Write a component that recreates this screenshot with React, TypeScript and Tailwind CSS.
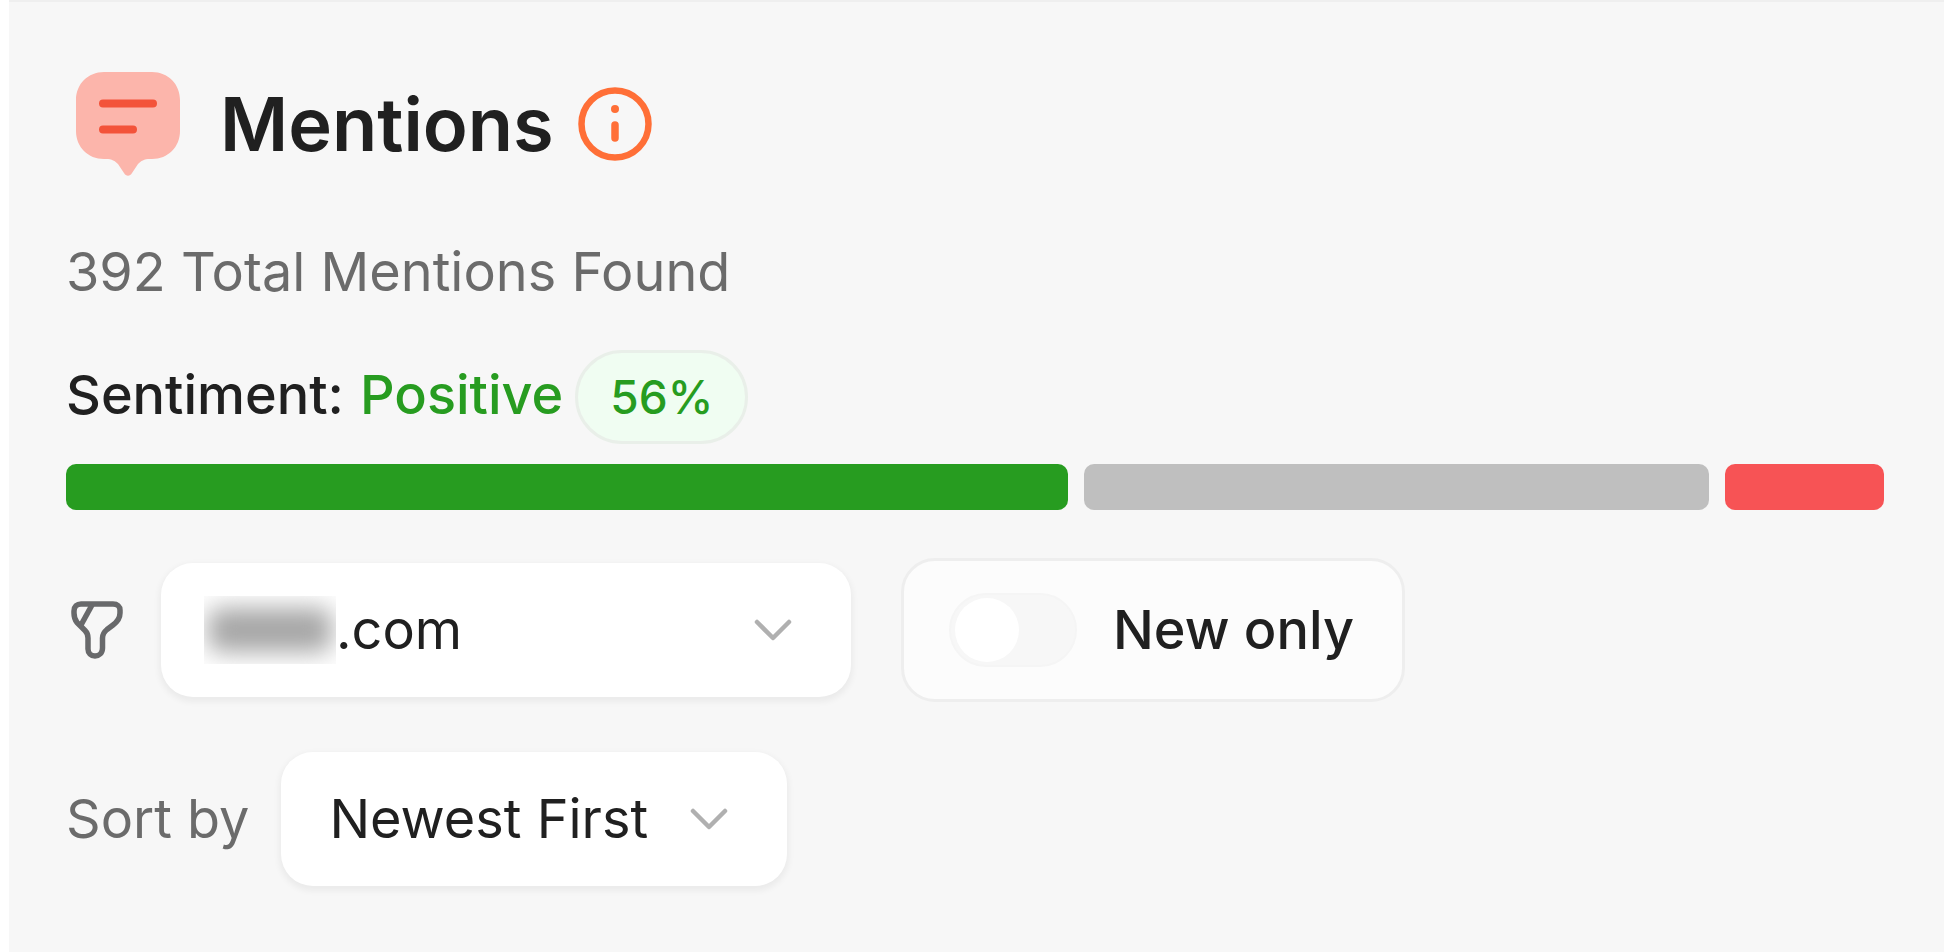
import { useState } from 'react';

const sentiment = [
  { label: 'Positive', count: 220, color: 'bg-[#279c20]' },
  { label: 'Neutral', count: 137, color: 'bg-[#bfbfbf]' },
  { label: 'Negative', count: 35, color: 'bg-[#f75355]' },
];

const MentionsIcon = () => (
  <svg className="h-[104px] w-[104px] shrink-0" viewBox="0 0 104 104" fill="none" aria-hidden="true">
    <path
      d="M28 0H76C92 0 104 12 104 28V59C104 75 92 87 76 87H74C68 87 65 89 62 92L56 101C54 104.500 50 104.500 48 101L42 92C39 89 36 87 30 87H28C12 87 0 75 0 59V28C0 12 12 0 28 0Z"
      fill="#fcb5ab"
    />
    <path d="M27 31.500H77M27 57.500H57" stroke="#f3533a" strokeWidth="8" strokeLinecap="round" />
  </svg>
);

const InfoIcon = () => (
  <svg className="h-[74px] w-[74px]" viewBox="0 0 74 74" fill="none" aria-hidden="true">
    <circle cx="37" cy="37" r="33.500" stroke="#ff6f37" strokeWidth="6.500" />
    <circle cx="37" cy="22" r="4" fill="#ff6f37" />
    <path d="M37 38V51" stroke="#ff6f37" strokeWidth="7.500" strokeLinecap="round" />
  </svg>
);

const FilterIcon = () => (
  <svg className="h-[58px] w-[52px] shrink-0" viewBox="0 0 52 58" fill="none" stroke="#68696b" strokeWidth="5.500" strokeLinejoin="round" aria-hidden="true">
    <path d="M10 3H42C46.500 3 49 5.500 49 9V12C49 17 46 21 42 24L36 28.500C33 31 31.500 33 31.500 37V47C31.500 52 28 55 24 55C20 55 17 52 17 48V37C17 34 16 31.500 14 29.500L6 21.500C4 19 3 16 3 12V10C3 5.500 6 3 10 3Z" />
    <path d="M21 4L10 24" />
  </svg>
);

const Chevron = () => (
  <svg className="pointer-events-none h-[22px] w-[38px] shrink-0" viewBox="0 0 38 22" fill="none" aria-hidden="true">
    <path d="M3 3L19 19L35 3" stroke="#b0b0b0" strokeWidth="4.500" strokeLinecap="round" strokeLinejoin="round" />
  </svg>
);

const App = () => {
  const [newOnly, setNewOnly] = useState(false);

  return (
    <div className="min-h-screen border-l-[9px] border-white bg-white font-['Inter',sans-serif] text-[54px] leading-[64px] text-[#202020]">
      <main className="min-h-screen border-t-2 border-[#efefef] bg-[#f7f7f7] pt-[70px] pr-[60px] pb-16 pl-[57px]">
        <header className="flex items-center pl-[10px]">
          <MentionsIcon />
          <h1 className="ml-10 text-[74px] leading-[96px] font-semibold">Mentions</h1>
          <button type="button" aria-label="About mentions" className="ml-6">
            <InfoIcon />
          </button>
        </header>

        <p className="mt-16 text-[#6b6b6b]">392 Total Mentions Found</p>

        <div className="mt-[46px] flex items-baseline font-medium">
          <span>Sentiment:</span>
          <span className="ml-4 text-[#279c20]">Positive</span>
          <span className="ml-3 inline-flex h-[94px] items-center rounded-full border-[3px] border-[#e9efe9] bg-[#f0fdf2] px-8 text-[46px] text-[#279c20]">
            56%
          </span>
        </div>

        <div className="mt-5 flex gap-4">
          {sentiment.map((item) => (
            <div
              key={item.label}
              title={item.label}
              className={`h-[46px] basis-0 rounded-[10px] ${item.color}`}
              style={{ flexGrow: item.count }}
            />
          ))}
        </div>

        <div className="mt-12 flex items-center">
          <div className="flex w-[95px] pl-[5px]">
            <FilterIcon />
          </div>
          <div className="flex h-[134px] w-[690px] items-center rounded-[32px] bg-white pr-[59px] pl-[43px] shadow-[0_3px_6px_2px_rgba(0,0,0,0.05)]">
            {/* account name stays hidden */}
            <div className="flex h-[68px] w-[132px] shrink-0 items-center overflow-hidden bg-white" aria-hidden="true">
              <div className="ml-1 h-11 w-[124px] shrink-0 rounded-xl bg-[#a6a6a6] blur-[12px]" />
            </div>
            <select aria-label="Source" className="min-w-0 flex-1 appearance-none bg-transparent outline-none">
              <option>.com</option>
            </select>
            <Chevron />
          </div>
          <label className="ml-[50px] flex h-[144px] items-center rounded-[34px] border-[3px] border-[#eeeeee] bg-[#fcfcfc] pr-12 pl-[45px] font-medium">
            <input
              type="checkbox"
              role="switch"
              checked={newOnly}
              onChange={(e) => setNewOnly(e.target.checked)}
              className="peer sr-only"
            />
            <span className="flex h-[74px] w-[128px] items-center rounded-full border-2 border-[#f5f5f5] bg-[#f7f7f7] px-1 peer-checked:justify-end peer-checked:bg-[#279c20]">
              <span className="h-16 w-16 rounded-full bg-white" />
            </span>
            <span className="ml-9">New only</span>
          </label>
        </div>

        <div className="mt-[50px] flex items-center">
          <label htmlFor="sort" className="text-[#6b6b6b]">Sort by</label>
          <div className="ml-8 flex h-[134px] w-[506px] items-center rounded-[32px] bg-white pr-[59px] pl-12 shadow-[0_3px_6px_2px_rgba(0,0,0,0.05)]">
            <select id="sort" className="min-w-0 flex-1 appearance-none bg-transparent outline-none">
              <option>Newest First</option>
              <option>Oldest First</option>
            </select>
            <Chevron />
          </div>
        </div>
      </main>
    </div>
  );
};

export default App;
